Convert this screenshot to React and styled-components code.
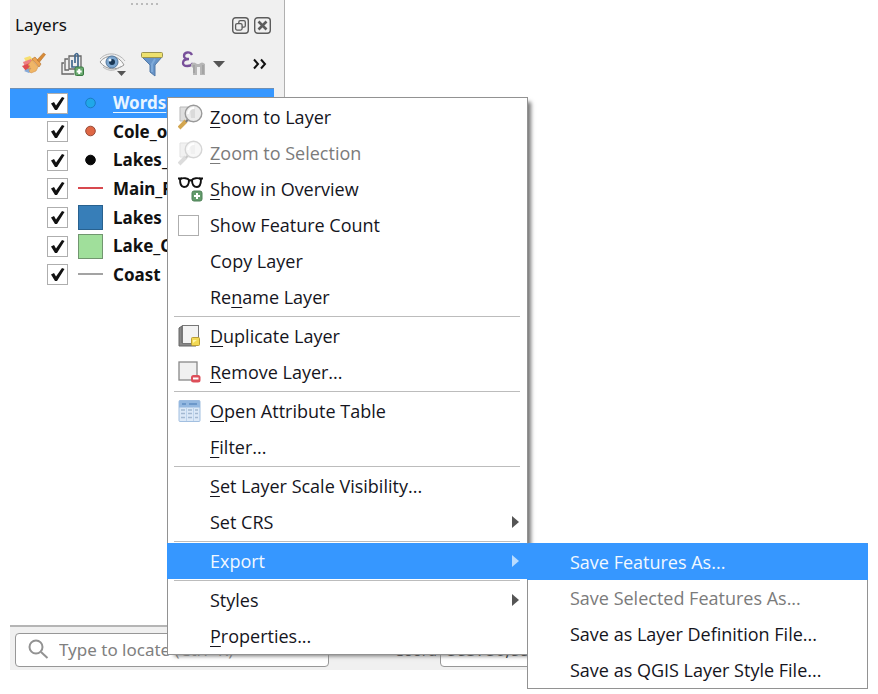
import React from "react";
import styled, { createGlobalStyle, css } from "styled-components";

const Global = createGlobalStyle`
  * { box-sizing: border-box; }
  body { margin: 0; background: #fff; color: #111; font: 17px/24px "Noto Sans", sans-serif; }
  button, input { font: inherit; color: inherit; }
  ul { list-style: none; margin: 0; padding: 0; }
`;

const Page = styled.div`
  position: relative;
  display: flex;
  flex-direction: column;
  min-height: 100vh;
  padding: 0 11px 24px 10px;
`;

const Dock = styled.section`
  display: flex;
  flex-direction: column;
  flex: 1;
  width: 275px;
  padding-right: 10px;
  background: #f0f0f0;
  border-right: 1px solid #b0b0b0;
`;

const Grip = styled.div`
  align-self: center;
  width: 27px;
  height: 2px;
  margin: 3px 0 7px 4px;
  background: repeating-linear-gradient(90deg, #bbb 0 2px, transparent 2px 5px);
`;

const TitleBar = styled.header`
  display: flex;
  align-items: center;
  gap: 5px;
  height: 26px;
  padding: 0 3px 0 5px;
`;

const Title = styled.h1`
  flex: 1;
  margin: 0;
  font-size: 17px;
  font-weight: 400;
`;

const IconButton = styled.button`
  display: flex;
  align-items: center;
  justify-content: center;
  padding: 0;
  border: 0;
  background: none;
  color: #111;
`;

const Toolbar = styled.div`
  display: flex;
  align-items: center;
  gap: 13px;
  height: 50px;
  padding: 1px 7px 0 11px;
`;

const ExpressionGroup = styled.div`
  display: flex;
  align-items: center;
  gap: 7px;
  flex: 1;
  padding-left: 4px;
`;

const Tree = styled.div`
  flex: 1;
  background: #fff;
  border-top: 1px solid #6f8fb3;
`;

const LayerList = styled.ul`
  display: grid;
  grid-template-rows: repeat(7, 1fr);
  height: 200px;
`;

const LayerRow = styled.li`
  display: grid;
  grid-template-columns: 21px 25px 1fr;
  gap: 10px;
  align-items: center;
  padding-left: 37px;
  background: ${(p) => (p.$selected ? "#3697ff" : "transparent")};
`;

const LayerLabel = styled.label`
  font-weight: 700;
  white-space: nowrap;
  overflow: hidden;
  ${(p) => p.$selected && css`
    color: #e9f5ff;
    text-decoration: underline;
    text-underline-offset: 3px;
  `}
`;

const Tick = styled.input`
  appearance: none;
  width: 21px;
  height: 21px;
  margin: 0;
  border: 1px solid #aeaeae;
  background: #fff;
  &:checked {
    background: #fff url("data:image/svg+xml,%3Csvg xmlns='http://www.w3.org/2000/svg' viewBox='0 0 19 19'%3E%3Cpath d='M3 9.5L6 8L8 11.5L14 3L16.5 4L9 16H7Z' fill='%23111'/%3E%3C/svg%3E") center / 19px no-repeat;
  }
`;

const StatusBar = styled.footer`
  display: flex;
  align-items: center;
  height: 45px;
  padding: 2px 5px 0;
  background: #f0f0f0;
  border-top: 2px solid #b5b5b5;
`;

const Locator = styled.div`
  display: flex;
  align-items: center;
  gap: 10px;
  width: 314px;
  height: 34px;
  padding-left: 12px;
  background: #fff;
  border: 1px solid #979797;
  border-radius: 4px;
`;

const LocatorInput = styled.input`
  flex: 1;
  min-width: 0;
  padding: 0;
  border: 0;
  background: none;
  &::placeholder { color: #808080; opacity: 1; }
`;

const CoordLabel = styled.label`
  width: 111px;
  padding-right: 3px;
  font-size: 15px;
  text-align: right;
`;

const CoordInput = styled.input`
  width: 190px;
  height: 34px;
  padding: 0 6px;
  background: #fff;
  border: 1px solid #979797;
  border-radius: 4px;
`;

const menuFrame = css`
  position: absolute;
  background: #fff;
  border: 1px solid #929292;
  font-family: "Open Sans", "Noto Sans", sans-serif;
  font-size: 18px;
`;

const ContextMenu = styled.ul`
  ${menuFrame}
  top: 97px;
  left: 167px;
  width: 361px;
  padding-top: 1px;
  box-shadow: 5px 3px 4px -2px #777;
`;

const Submenu = styled.ul`
  ${menuFrame}
  top: 0;
  left: 100%;
  width: 341px;
  border-top-color: #3697ff;
`;

const MenuEntry = styled.li`
  position: relative;
`;

const MenuButton = styled.button`
  display: grid;
  grid-template-columns: 32px 1fr 7px;
  align-items: center;
  width: ${(p) => (p.$active ? "calc(100% + 2px)" : "100%")};
  height: 36px;
  margin: ${(p) => (p.$active ? "0 -1px" : "0")};
  padding: 0 ${(p) => (p.$active ? "9px 0 11px" : "8px 0 10px")};
  border: 0;
  text-align: left;
  white-space: nowrap;
  background: ${(p) => (p.$active ? "#3697ff" : "transparent")};
  color: ${(p) => (p.$active ? "#f1f8ff" : p.disabled ? "#7b7b7b" : "#15151d")};
  & > span { grid-column: 2; }
  & > svg:first-child { grid-column: 1; }
  & > svg:last-child:not(:first-child) { grid-column: 3; }
  u { text-underline-offset: 3px; }
`;

const CheckEntry = styled.label`
  display: grid;
  grid-template-columns: 22px 1fr;
  gap: 10px;
  align-items: center;
  height: 36px;
  padding-left: 10px;
  color: #15151d;
`;

const Separator = styled.li`
  height: 3px;
  margin: 0 7px 0 6px;
  border: solid #fff;
  border-width: 1px 0;
  background: #bcbcbc;
`;

const FloatIcon = () => (
  <svg width="17" height="17" viewBox="0 0 17 17" fill="none" stroke="#5c5c5c">
    <rect x=".7" y=".7" width="15.6" height="15.6" rx="3" strokeWidth="1.4" />
    <rect x="6.8" y="3.7" width="6.5" height="6.5" rx="1.5" strokeWidth="1.3" />
    <rect x="3.6" y="6.6" width="6.5" height="6.5" rx="1.5" fill="#f0f0f0" strokeWidth="1.3" />
  </svg>
);

const CloseIcon = () => (
  <svg width="17" height="17" viewBox="0 0 17 17" fill="none" stroke="#5c5c5c">
    <rect x=".7" y=".7" width="15.6" height="15.6" rx="3" strokeWidth="1.4" />
    <path d="M4.5 4.5l8 8M12.5 4.5l-8 8" strokeWidth="2.6" />
  </svg>
);

const BrushIcon = () => (
  <svg width="26" height="26" viewBox="0 0 26 26">
    <path d="M3 7l6-2 4 5-7 3z" fill="#f6df70" />
    <path d="M2 11l8-3 3 5-9 3z" fill="#ee7f83" />
    <path d="M1 15l8-3 4 4-8 4z" fill="#df4c50" />
    <path d="M3 20l8-5 3 3-6 4z" fill="#85a9d8" />
    <path d="M11 9l6 7-2 4-5 2-2-2 2-3-3 1 2-3-2-1z" fill="#f0b667" stroke="#d4924a" strokeWidth=".6" />
    <path d="M11 8l3-2 6 7-2 3z" fill="#eda451" stroke="#b97a36" strokeWidth=".7" />
    <path d="M16 9l6.500-7 2 1.500-6 7.500z" fill="#d88b37" stroke="#b66f27" strokeWidth=".6" />
  </svg>
);

const AddGroupIcon = () => (
  <svg width="26" height="26" viewBox="0 0 26 26" fill="none">
    <path d="M4 12H2v11h12M8 8H5v11h4" stroke="#666" strokeWidth="1.300" />
    <path d="M9 5h12v13H9z" fill="#eee" stroke="#666" strokeWidth="1.300" />
    <path d="M12 9v7h6V4q-1-3-3 0v8" stroke="#42698f" strokeWidth="1.700" />
    <rect x="15" y="16" width="8.500" height="8.500" rx="1.500" fill="#6aaa70" stroke="#3b7a42" />
    <path d="M19.200 18v5M16.700 20.500h5" stroke="#fff" strokeWidth="2" />
  </svg>
);

const EyeIcon = () => (
  <svg width="28" height="28" viewBox="0 0 28 28">
    <path d="M1 12C7 4 19 4 25 15 17 21 7 20 1 12z" fill="#f8f8f8" stroke="#969696" />
    <path d="M1 9C8 1 20 3 26 11M4 17c6 5 13 4 18-1" fill="none" stroke="#b6b6b6" />
    <circle cx="13" cy="12" r="6" fill="#7ca6cf" stroke="#54789e" />
    <circle cx="13" cy="12" r="3" fill="#193755" />
    <circle cx="11" cy="10" r="1.500" fill="#e7f4ff" />
    <path d="M18 21h9l-4.500 5z" fill="#555" />
  </svg>
);

const FilterIcon = () => (
  <svg width="24" height="26" viewBox="0 0 24 26">
    <path d="M2 6h20l-7 8v11l-5-4v-7z" fill="#6794c8" stroke="#5079a8" />
    <path d="M15 8l-3 5v8" fill="none" stroke="#7eaad9" strokeWidth="2" />
    <rect x="1.500" y="1.500" width="21" height="5" rx="1" fill="#eee16e" stroke="#9c944e" />
  </svg>
);

const EpsilonIcon = () => (
  <svg width="25" height="28" viewBox="0 0 25 28">
    <path d="M11 5C9 1 3 2 3 6c0 3 3 3 5 3-4 0-6 1-6 4 0 4 8 4 10 0" fill="none" stroke="#78509a" strokeWidth="2.300" />
    <path d="M10 14q3-3 6 0h2q3-3 6 0v11h-5v-8h-3v8h-4v-7l-2-2z" fill="#b6b6b6" />
    <path d="M13 15v8M22 15v9" stroke="#939393" />
  </svg>
);

const CaretIcon = () => (
  <svg width="12" height="8" viewBox="0 0 12 8"><path d="M0 1h12L6 7.500z" fill="#555" /></svg>
);

const MoreIcon = () => (
  <svg width="14" height="12" viewBox="0 0 14 12" fill="none" stroke="#111" strokeWidth="2">
    <path d="M1 1.500L5 6l-4 4.500M8 1.500L12 6l-4 4.500" />
  </svg>
);

const SearchIcon = () => (
  <svg width="21" height="21" viewBox="0 0 21 21" fill="none" stroke="#929292" strokeWidth="2">
    <circle cx="8" cy="8" r="6.500" /><path d="M13 13l6.500 6" />
  </svg>
);

const ZoomIcon = ({ faded }) => (
  <svg width="25" height="26" viewBox="0 0 25 26" opacity={faded ? 0.4 : 1}>
    <path d="M2 3h14v14H2z" fill="#dedede" stroke="#b9b9b9" />
    <path d="M1 24l7-7" stroke={faded ? "#aaa" : "#d3a650"} strokeWidth="4" />
    <path d="M8 18l2-3" stroke="#777" strokeWidth="2" />
    <circle cx="15.500" cy="9.500" r="8.300" fill="#ececec" stroke="#999" strokeWidth="1.400" />
    <path d="M12 5h5v9h-4z" fill="#dadada" />
    <path d="M10 10a6 6 0 0 1 6-6" stroke="#fff" fill="none" strokeWidth="2" />
  </svg>
);

const GlassesIcon = () => (
  <svg width="26" height="28" viewBox="0 0 26 28" fill="none">
    <path d="M0 3.500h4M25 3.500h-4M11 6q1.500-1.500 3 0" stroke="#111" strokeWidth="2" />
    <path d="M2 4c3-1.500 8-1 9 1 0 5-2 7-5 7S2 9 2 4zM23 4c-3-1.500-8-1-9 1 0 5 2 7 5 7s4-3 4-8z" stroke="#111" strokeWidth="1.900" />
    <rect x="14" y="16" width="10" height="10" rx="2" fill="#649c6c" stroke="#4d8056" />
    <path d="M19 18v6M16 21h6" stroke="#fff" strokeWidth="2" />
  </svg>
);

const DuplicateIcon = () => (
  <svg width="23" height="24" viewBox="0 0 23 24">
    <path d="M1 4l3-2v17h14v3H1z" fill="#888" stroke="#666" />
    <rect x="4.500" y="1.500" width="16" height="18" fill="#f3f3f3" stroke="#777" />
    <rect x="13.500" y="13.500" width="8" height="8" rx="1" fill="#f2d955" stroke="#bb9d33" />
    <path d="M15 19v-3h4z" fill="#fff5a6" />
  </svg>
);

const RemoveIcon = () => (
  <svg width="23" height="24" viewBox="0 0 23 24">
    <rect x="1" y="2" width="18" height="18" fill="#f0f0f0" stroke="#888" strokeWidth="1.300" />
    <rect x="13" y="15" width="9.500" height="7.500" rx="2.500" fill="#dd4e59" />
    <path d="M15 18.500h5.500" stroke="#fff" strokeWidth="2" />
  </svg>
);

const TableIcon = () => (
  <svg width="23" height="24" viewBox="0 0 23 24">
    <rect x="1" y="1.500" width="21" height="21" rx="1" fill="#dce9f7" stroke="#a2bfe0" />
    <path d="M1 2.500q0-1 1-1h19q1 0 1 1v6H1z" fill="#94b8e0" />
    <path d="M4 5h4M11 5h8" stroke="#5f8dc2" strokeWidth="1.500" />
    <path d="M8.500 8v14M15.500 8v14" stroke="#bdd3ec" />
    <path d="M3 11h4M10 11h4M17 11h3M3 14.500h4M10 14.500h4M17 14.500h3M3 18.500h4M10 18.500h4M17 18.500h3" stroke="#a3b9d1" strokeWidth="1.500" />
  </svg>
);

const ArrowIcon = ({ light }) => (
  <svg width="7" height="12" viewBox="0 0 7 12"><path d="M0 0l7 6-7 6z" fill={light ? "#b9dcff" : "#555"} /></svg>
);

const Symbol = ({ kind, color, edge }) => (
  <svg width="25" height="25" viewBox="0 0 25 25">
    {kind === "dot" && <circle cx="12.500" cy="12" r="4.800" fill={color} stroke={edge} />}
    {kind === "line" && <path d="M0 12h25" stroke={color} strokeWidth={edge} />}
    {kind === "fill" && <rect x=".5" y=".5" width="24" height="24" fill={color} stroke={edge} />}
  </svg>
);

const layers = [
  { name: "Words", kind: "dot", color: "#20a8e8", edge: "#1a7cc4", selected: true },
  { name: "Cole_o", kind: "dot", color: "#df6745", edge: "#964b39" },
  { name: "Lakes_", kind: "dot", color: "#080808", edge: "#080808" },
  { name: "Main_R", kind: "line", color: "#d8494f", edge: 2 },
  { name: "Lakes", kind: "fill", color: "#377eb8", edge: "#28618f" },
  { name: "Lake_C", kind: "fill", color: "#a0df9b", edge: "#71966f" },
  { name: "Coast", kind: "line", color: "#858585", edge: 1.5 },
];

function MenuItem({ icon, arrow, active, disabled, children, submenu }) {
  return (
    <MenuEntry>
      <MenuButton type="button" $active={active} disabled={disabled}>
        {icon}
        <span>{children}</span>
        {arrow && <ArrowIcon light={active} />}
      </MenuButton>
      {submenu}
    </MenuEntry>
  );
}

function ExportMenu() {
  return (
    <Submenu>
      <MenuItem active>Save Features As...</MenuItem>
      <MenuItem disabled>Save Selected Features As...</MenuItem>
      <MenuItem>Save as Layer Definition File...</MenuItem>
      <MenuItem>Save as QGIS Layer Style File...</MenuItem>
    </Submenu>
  );
}

export default function App() {
  return (
    <Page>
      <Global />
      <Dock>
        <Grip />
        <TitleBar>
          <Title>Layers</Title>
          <IconButton type="button" aria-label="Float panel"><FloatIcon /></IconButton>
          <IconButton type="button" aria-label="Close panel"><CloseIcon /></IconButton>
        </TitleBar>
        <Toolbar>
          <IconButton type="button" aria-label="Layer styling"><BrushIcon /></IconButton>
          <IconButton type="button" aria-label="Add group"><AddGroupIcon /></IconButton>
          <IconButton type="button" aria-label="Map themes"><EyeIcon /></IconButton>
          <IconButton type="button" aria-label="Filter legend"><FilterIcon /></IconButton>
          <ExpressionGroup>
            <IconButton type="button" aria-label="Filter by expression"><EpsilonIcon /></IconButton>
            <IconButton type="button" aria-label="Expression options"><CaretIcon /></IconButton>
          </ExpressionGroup>
          <IconButton type="button" aria-label="More tools"><MoreIcon /></IconButton>
        </Toolbar>
        <Tree>
          <LayerList>
            {layers.map((l) => (
              <LayerRow key={l.name} $selected={l.selected}>
                <Tick type="checkbox" id={`layer-${l.name}`} defaultChecked />
                <Symbol {...l} />
                <LayerLabel htmlFor={`layer-${l.name}`} $selected={l.selected}>{l.name}</LayerLabel>
              </LayerRow>
            ))}
          </LayerList>
        </Tree>
      </Dock>
      <StatusBar>
        <Locator>
          <SearchIcon />
          <LocatorInput aria-label="Locate" placeholder="Type to locate (Ctrl+K)" />
        </Locator>
        <CoordLabel htmlFor="coordinate">Coord</CoordLabel>
        <CoordInput id="coordinate" defaultValue="583750,880" />
      </StatusBar>
      <ContextMenu>
        <MenuItem icon={<ZoomIcon />}><u>Z</u>oom to Layer</MenuItem>
        <MenuItem icon={<ZoomIcon faded />} disabled><u>Z</u>oom to Selection</MenuItem>
        <MenuItem icon={<GlassesIcon />}><u>S</u>how in Overview</MenuItem>
        <MenuEntry>
          <CheckEntry><Tick type="checkbox" />Show Feature Count</CheckEntry>
        </MenuEntry>
        <MenuItem>Copy Layer</MenuItem>
        <MenuItem>Re<u>n</u>ame Layer</MenuItem>
        <Separator />
        <MenuItem icon={<DuplicateIcon />}><u>D</u>uplicate Layer</MenuItem>
        <MenuItem icon={<RemoveIcon />}><u>R</u>emove Layer...</MenuItem>
        <Separator />
        <MenuItem icon={<TableIcon />}><u>O</u>pen Attribute Table</MenuItem>
        <MenuItem><u>F</u>ilter...</MenuItem>
        <Separator />
        <MenuItem><u>S</u>et Layer Scale Visibility...</MenuItem>
        <MenuItem arrow>Set CRS</MenuItem>
        <Separator />
        <MenuItem arrow active submenu={<ExportMenu />}>Export</MenuItem>
        <Separator />
        <MenuItem arrow>Styles</MenuItem>
        <MenuItem><u>P</u>roperties...</MenuItem>
      </ContextMenu>
    </Page>
  );
}
